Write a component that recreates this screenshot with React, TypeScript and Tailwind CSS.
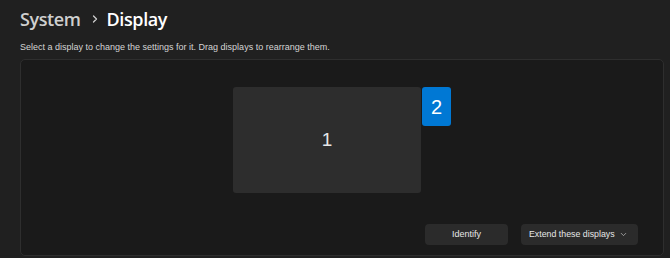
import { ChevronRight, ChevronDown } from 'lucide-react';

export default function App() {
  return (
    <div
      className="w-[670px] h-[258px] bg-[#202020] text-white overflow-hidden pl-5 pr-[6px]"
      style={{ fontFamily: '"Liberation Sans", Arial, sans-serif' }}
    >
      {/* Breadcrumb */}
      <div
        className="flex items-center h-[36px] pt-[1px]"
        style={{ fontFamily: '"Open Sans", "Noto Sans", sans-serif' }}
      >
        <span className="text-[18px] font-semibold text-[#cfcfcf] leading-none tracking-[-0.4px]">System</span>
        <ChevronRight size={12} strokeWidth={2.5} className="ml-[8px] mr-[6px] text-[#cfcfcf]" />
        <span className="text-[18px] font-semibold leading-none tracking-[-0.4px]">Display</span>
      </div>

      <p className="text-[9px] text-[#d4d4d4] mt-[4px] leading-[14px]">
        Select a display to change the settings for it. Drag displays to rearrange them.
      </p>

      {/* Arrangement panel */}
      <div className="mt-[5px] h-[197px] bg-[#1a1a1a] border border-[#2e2e2e] rounded-[5px] flex flex-col">
        <div className="flex pt-[27px] pl-[212px]">
          <div className="w-[188px] h-[106px] bg-[#2d2d2d] rounded-[3px] flex items-center justify-center text-[19px] text-[#e6e6e6]">
            1
          </div>
          <div className="ml-[1px] w-[29px] h-[39px] bg-[#0078d4] rounded-[3px] flex items-center justify-center text-[20px]">
            2
          </div>
        </div>
        <div className="flex justify-end gap-[13px] mt-auto mb-[10px] mr-[25px]">
          <button className="w-[83px] h-[21px] bg-[#2b2b2b] rounded-[4px] text-[9px] text-[#e6e6e6] whitespace-nowrap">
            Identify
          </button>
          <button className="w-[117px] h-[21px] bg-[#2b2b2b] rounded-[4px] text-[8.8px] text-[#e6e6e6] flex items-center pl-[8px] pr-[10px] justify-between whitespace-nowrap">
            <span>Extend these displays</span>
            <ChevronDown size={9} className="text-[#bbbbbb]" />
          </button>
        </div>
      </div>
    </div>
  );
}
